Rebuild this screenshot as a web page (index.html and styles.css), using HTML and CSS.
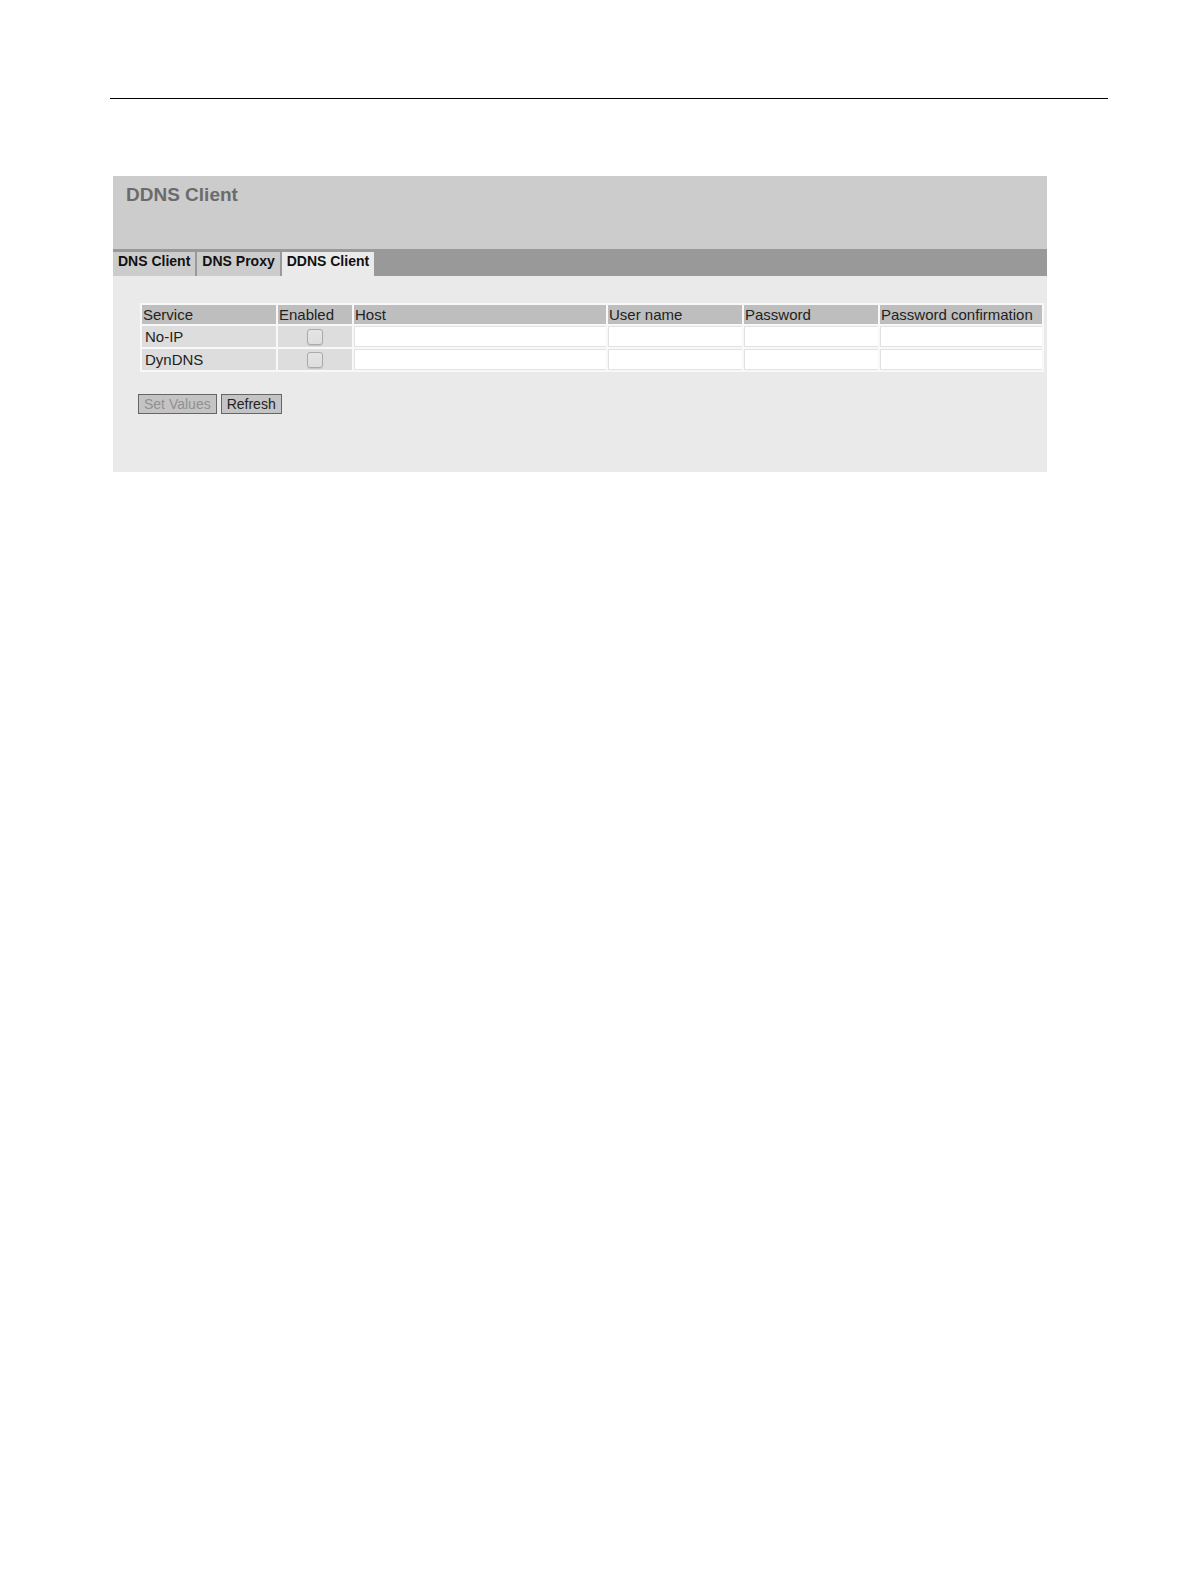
FILE: index.html
```html
<!DOCTYPE html>
<html lang="en">
<head>
<meta charset="utf-8">
<title>DDNS Client</title>
<link rel="stylesheet" href="styles.css">
</head>
<body>
<div class="page">
  <hr class="page-rule">
  <main class="panel">
    <header class="panel-header">
      <h1 class="panel-title">DDNS Client</h1>
    </header>
    <nav class="tabs">
      <a class="tab" href="#dns-client">DNS Client</a>
      <a class="tab" href="#dns-proxy">DNS Proxy</a>
      <a class="tab tab-active" href="#ddns-client" aria-current="page">DDNS Client</a>
    </nav>
    <form class="panel-body">
      <table class="services">
        <colgroup>
          <col class="col-service">
          <col class="col-enabled">
          <col class="col-host">
          <col class="col-user">
          <col class="col-password">
          <col class="col-confirm">
        </colgroup>
        <thead>
          <tr>
            <th scope="col">Service</th>
            <th scope="col">Enabled</th>
            <th scope="col">Host</th>
            <th scope="col">User name</th>
            <th scope="col">Password</th>
            <th scope="col">Password confirmation</th>
          </tr>
        </thead>
        <tbody>
          <tr>
            <td class="name"><label for="noip-enabled">No-IP</label></td>
            <td class="check"><input class="checkbox" type="checkbox" id="noip-enabled"></td>
            <td class="entry"><input class="field" type="text" aria-label="No-IP host"></td>
            <td class="entry"><input class="field" type="text" aria-label="No-IP user name"></td>
            <td class="entry"><input class="field" type="password" aria-label="No-IP password"></td>
            <td class="entry"><input class="field" type="password" aria-label="No-IP password confirmation"></td>
          </tr>
          <tr>
            <td class="name"><label for="dyndns-enabled">DynDNS</label></td>
            <td class="check"><input class="checkbox" type="checkbox" id="dyndns-enabled"></td>
            <td class="entry"><input class="field" type="text" aria-label="DynDNS host"></td>
            <td class="entry"><input class="field" type="text" aria-label="DynDNS user name"></td>
            <td class="entry"><input class="field" type="password" aria-label="DynDNS password"></td>
            <td class="entry"><input class="field" type="password" aria-label="DynDNS password confirmation"></td>
          </tr>
        </tbody>
      </table>
      <div class="actions">
        <button class="button" type="submit" disabled>Set Values</button>
        <button class="button" type="button">Refresh</button>
      </div>
    </form>
  </main>
</div>
</body>
</html>
```
FILE: styles.css
```css
* {
  box-sizing: border-box;
}

body {
  margin: 0;
  background: #fff;
  color: #222;
  font-family: "Liberation Sans", Arial, sans-serif;
  font-size: 15px;
}

.page {
  padding: 98px 83px 98px 110px;
}

.page-rule {
  height: 1px;
  margin: 0 0 77px;
  border: 0;
  background: #000;
}

.panel {
  margin: 0 61px 0 3px;
  background: #eaeaea;
}

.panel-header {
  height: 73px;
  padding: 8px 13px;
  background: #ccc;
}

.panel-title {
  margin: 0;
  color: #6b6b6b;
  font-size: 19px;
  line-height: 22px;
}

.tabs {
  display: flex;
  gap: 2px;
  padding-top: 3px;
  background: #999;
}

.tab {
  height: 24px;
  padding: 0 5px;
  background: #ccc;
  color: #111;
  font-size: 14px;
  font-weight: bold;
  line-height: 18px;
  text-decoration: none;
}

.tab-active {
  background: #eaeaea;
}

.panel-body {
  padding: 27px 2px 58px 25px;
}

.services {
  width: calc(100% - 3px);
  margin-left: 2px;
  table-layout: fixed;
  border-spacing: 2px;
  background: #f8f8f8;
}

.col-service,
.col-user,
.col-password {
  width: 134px;
}

.col-enabled {
  width: 74px;
}

.col-confirm {
  width: 162px;
}

.services th {
  height: 19px;
  padding: 0 1px;
  background: #bebebe;
  font-weight: normal;
  line-height: 19px;
  text-align: left;
  white-space: nowrap;
}

.services td {
  height: 21px;
  padding: 0;
  background: #ddd;
  line-height: 21px;
}

.services .name {
  padding-left: 3px;
}

.services .check {
  text-align: center;
}

.checkbox {
  display: block;
  width: 16px;
  height: 16px;
  margin: 0 auto;
  appearance: none;
  border: 1px solid #aaa;
  border-radius: 3px;
  background: linear-gradient(#e4e4e4, #dedede);
  box-shadow: 0 1px 1px #c4c4c4;
}

.checkbox:checked {
  background: #777;
}

.services .entry {
  background: #fff;
}

.field {
  display: block;
  width: 100%;
  height: 21px;
  padding: 0 2px;
  border: 1px solid #e2e2e2;
  border-right: 0;
  border-radius: 0;
  background: #fff;
  font: inherit;
}

.actions {
  display: flex;
  gap: 4px;
  margin-top: 22px;
}

.button {
  height: 20px;
  padding: 0 5px;
  border: 1px solid #666;
  border-radius: 0;
  background: #c4c4c4;
  color: #222;
  font-family: inherit;
  font-size: 14px;
  line-height: 18px;
}

.button:disabled {
  color: #919191;
}
```
